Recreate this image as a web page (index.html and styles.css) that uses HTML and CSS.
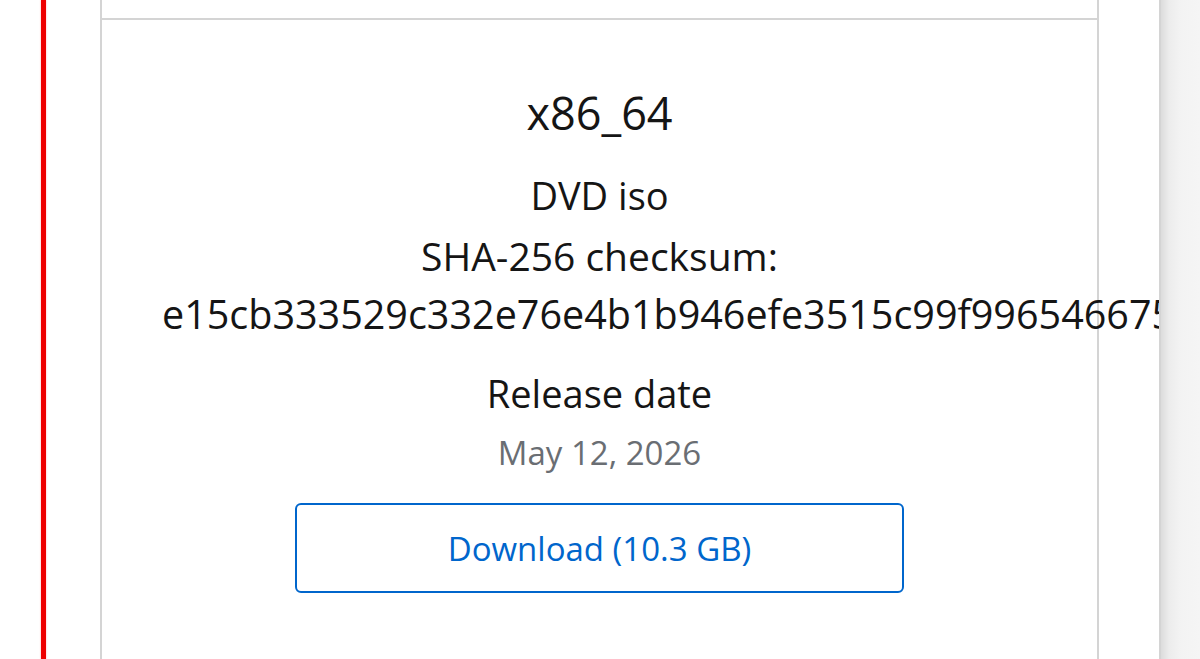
FILE: index.html
```html
<!DOCTYPE html>
<html lang="en">
<head>
<meta charset="utf-8">
<title>Download</title>
<link rel="stylesheet" href="styles.css">
</head>
<body>
<div class="page">
  <div class="accent"></div>
  <div class="scroller">
    <div class="column">
      <div class="cell-prev"></div>
      <div class="card">
        <div class="arch">x86_64</div>
        <div class="filetype">DVD iso</div>
        <div class="checksum-label">SHA-256 checksum:</div>
        <div class="checksum">e15cb333529c332e76e4b1b946efe3515c99f99654667597a1c2d0b8e4f3a6c1b9d27e5f0a8c3b41</div>
        <div class="release-label">Release date</div>
        <div class="release-date">May 12, 2026</div>
        <a class="download" href="#">Download (10.3 GB)</a>
      </div>
    </div>
  </div>
  <div class="gutter"></div>
</div>
</body>
</html>
```
FILE: styles.css
```css
html, body {
  margin: 0;
  padding: 0;
  background: #ffffff;
}
body {
  font-family: "Open Sans", "Noto Sans", sans-serif;
  color: #151515;
}
.page {
  display: flex;
  height: 659px;
  padding-left: 41px;
  overflow: hidden;
}
.accent {
  width: 5px;
  flex: none;
  background: #ee0000;
  box-shadow: 0 0 2px rgba(238, 0, 0, 0.35);
}
.scroller {
  flex: 1;
  overflow: hidden;
  border-right: 2px solid #d4d4d4;
  padding-left: 54px;
}
.column {
  width: 999px;
}
.cell-prev {
  height: 18px;
  border-left: 2px solid #d4d4d4;
  border-right: 2px solid #d4d4d4;
  border-bottom: 2px solid #d4d4d4;
}
.card {
  border-left: 2px solid #d4d4d4;
  border-right: 2px solid #d4d4d4;
  padding: 63px 60px 0;
  min-height: 700px;
  text-align: center;
}
.arch {
  font-size: 45px;
  line-height: 60px;
}
.filetype {
  font-size: 38px;
  line-height: 60px;
  margin-top: 22px;
}
.checksum-label {
  font-size: 39px;
  line-height: 61px;
}
.checksum {
  font-size: 39.5px;
  line-height: 56px;
  white-space: nowrap;
}
.release-label {
  font-size: 38px;
  line-height: 60px;
  margin-top: 21px;
}
.release-date {
  font-size: 33px;
  line-height: 60px;
  color: #6a6e73;
}
.download {
  display: flex;
  align-items: center;
  justify-content: center;
  box-sizing: border-box;
  width: 609px;
  height: 90px;
  margin: 20px auto 0;
  border: 2px solid #0066cc;
  border-radius: 6px;
  color: #0066cc;
  font-size: 33px;
  text-decoration: none;
}
.gutter {
  width: 39px;
  flex: none;
  background: linear-gradient(to right, #dcdcdc 0px, #ececec 8px, #f3f3f3 20px, #f5f5f5 39px);
}
```
